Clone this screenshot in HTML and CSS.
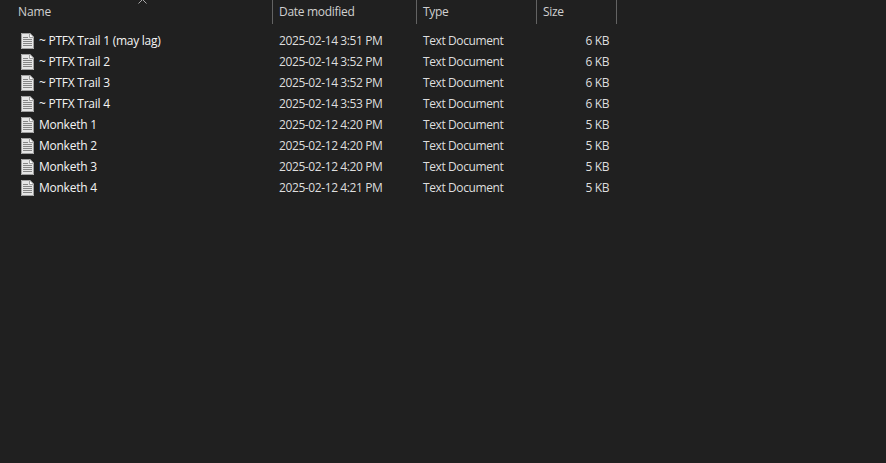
FILE: index.html
```html
<!DOCTYPE html>
<html lang="en">
<head>
<meta charset="utf-8">
<title>Files</title>
<link rel="stylesheet" href="styles.css">
</head>
<body>
<svg class="defs" width="0" height="0" aria-hidden="true"><defs>
<symbol id="doc" viewBox="0 0 13 16">
<path d="M0 0H9L13 4V16H0Z" fill="#e6e6e6"/>
<path d="M0.5 .5H8.5L12.5 4.5V15.5H.5Z" fill="none" stroke="#a0a0a0"/>
<path d="M8.5 .5V4.5H12.5" fill="#fff" stroke="#a0a0a0"/>
<path d="M2 4.5H7M2 6.5H11M2 8.5H11M2 10.5H11M2 12.5H11" stroke="#858585"/>
</symbol></defs></svg>
<div class="list">
  <div class="grid head">
    <div class="hcell name">Name<svg class="sort" width="9" height="5" viewBox="0 0 9 5"><path d="M.5 4.5L4.5 .5L8.5 4.5" fill="none" stroke="#a8a8a8"/></svg></div>
    <div class="hcell">Date modified</div>
    <div class="hcell">Type</div>
    <div class="hcell">Size</div>
  </div>
  <div class="rows">
    <div class="grid row"><div class="fname"><svg class="ico"><use href="#doc"/></svg>~ PTFX Trail 1 (may lag)</div><div class="cell">2025-02-14 3:51 PM</div><div class="cell">Text Document</div><div class="size">6 KB</div></div>
    <div class="grid row"><div class="fname"><svg class="ico"><use href="#doc"/></svg>~ PTFX Trail 2</div><div class="cell">2025-02-14 3:52 PM</div><div class="cell">Text Document</div><div class="size">6 KB</div></div>
    <div class="grid row"><div class="fname"><svg class="ico"><use href="#doc"/></svg>~ PTFX Trail 3</div><div class="cell">2025-02-14 3:52 PM</div><div class="cell">Text Document</div><div class="size">6 KB</div></div>
    <div class="grid row"><div class="fname"><svg class="ico"><use href="#doc"/></svg>~ PTFX Trail 4</div><div class="cell">2025-02-14 3:53 PM</div><div class="cell">Text Document</div><div class="size">6 KB</div></div>
    <div class="grid row"><div class="fname"><svg class="ico"><use href="#doc"/></svg>Monketh 1</div><div class="cell">2025-02-12 4:20 PM</div><div class="cell">Text Document</div><div class="size">5 KB</div></div>
    <div class="grid row"><div class="fname"><svg class="ico"><use href="#doc"/></svg>Monketh 2</div><div class="cell">2025-02-12 4:20 PM</div><div class="cell">Text Document</div><div class="size">5 KB</div></div>
    <div class="grid row"><div class="fname"><svg class="ico"><use href="#doc"/></svg>Monketh 3</div><div class="cell">2025-02-12 4:20 PM</div><div class="cell">Text Document</div><div class="size">5 KB</div></div>
    <div class="grid row"><div class="fname"><svg class="ico"><use href="#doc"/></svg>Monketh 4</div><div class="cell">2025-02-12 4:21 PM</div><div class="cell">Text Document</div><div class="size">5 KB</div></div>
  </div>
</div>
</body>
</html>
```
FILE: styles.css
```css
html, body { margin: 0; height: 100%; background: #202020; overflow: hidden; }
body { font: 12px/16px "Open Sans", "Noto Sans", sans-serif; color: #dedede; }
.defs { display: block; height: 0; }
.grid { display: grid; grid-template-columns: 273px 144px 120px 80px; }
.head { height: 24px; }
.hcell { padding-left: 6px; border-right: 1px solid #636363; line-height: 24px; color: #d0d0d0; letter-spacing: -0.3px; position: relative; }
.hcell.name { padding-left: 18px; letter-spacing: -0.1px; }
.sort { position: absolute; left: 138px; top: -1px; }
.rows { padding-top: 6px; }
.row { height: 21px; line-height: 21px; letter-spacing: -0.4px; }
.fname { display: flex; align-items: center; padding-left: 21px; color: #f4f4f4; letter-spacing: -0.25px; }
.ico { width: 13px; height: 16px; margin-right: 5px; flex: none; }
.cell { padding-left: 6px; }
.size { text-align: right; padding-right: 8px; }
```
